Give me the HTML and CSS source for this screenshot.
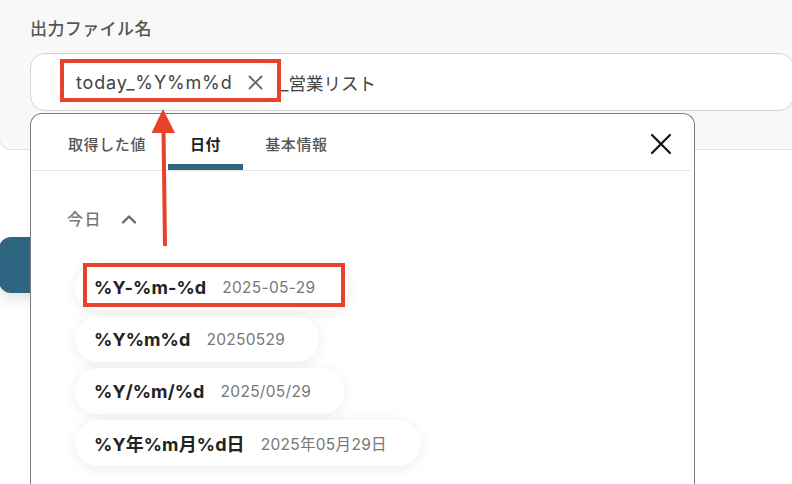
FILE: index.html
```html
<!DOCTYPE html>
<html lang="ja">
<head>
<meta charset="utf-8">
<link rel="stylesheet" href="styles.css">
</head>
<body>
<div class="page">
  <section class="top-panel">
    <div class="field-label">出力ファイル名</div>
    <div class="field-input">
      <span class="chip">
        <span class="chip-text">today_%Y%m%d</span>
        <svg class="chip-x" width="15" height="15" viewBox="0 0 15 15"><path d="M1.5 1.5 L13.5 13.5 M13.5 1.5 L1.5 13.5" stroke="#666" stroke-width="1.8" stroke-linecap="round" fill="none"/></svg>
      </span>
      <span class="suffix">_営業リスト</span>
    </div>
  </section>

  <div class="teal-button"></div>

  <div class="dropdown">
    <div class="tabs">
      <div class="tab">取得した値</div>
      <div class="tab active">日付</div>
      <div class="tab">基本情報</div>
      <svg class="close" width="22" height="22" viewBox="0 0 22 22"><path d="M2 2 L20 20 M20 2 L2 20" stroke="#111" stroke-width="2.2" stroke-linecap="round" fill="none"/></svg>
    </div>
    <div class="section-head">
      <span class="section-title">今日</span>
      <svg class="chev" width="16" height="10" viewBox="0 0 16 10"><path d="M2 8.5 L8 2.5 L14 8.5" stroke="#6a6a6a" stroke-width="2.4" stroke-linecap="round" stroke-linejoin="round" fill="none"/></svg>
    </div>
    <div class="pills">
      <div class="pill"><span class="code">%Y-%m-%d</span><span class="sample">2025-05-29</span></div>
      <div class="pill"><span class="code">%Y%m%d</span><span class="sample">20250529</span></div>
      <div class="pill"><span class="code">%Y/%m/%d</span><span class="sample">2025/05/29</span></div>
      <div class="pill"><span class="code">%Y年%m月%d日</span><span class="sample">2025年05月29日</span></div>
    </div>
  </div>

  <div class="mark mark-chip"></div>
  <div class="mark mark-pill"></div>
  <svg class="arrow" width="40" height="150" viewBox="0 0 40 150">
    <line x1="15" y1="138" x2="13.5" y2="22" stroke="#e8432a" stroke-width="4"/>
    <polygon points="13,1 1.5,25 25,25" fill="#e8432a"/>
  </svg>
</div>
</body>
</html>
```

FILE: styles.css
```css
* { box-sizing: border-box; }
html, body { margin: 0; padding: 0; background: #ffffff; }
body {
  font-family: "Inter", "Noto Sans CJK JP", sans-serif;
  width: 792px;
  height: 484px;
  overflow: hidden;
}
.page { position: relative; width: 792px; height: 484px; overflow: hidden; }

.top-panel {
  height: 150px;
  background: #f8f8f8;
  border-bottom: 1px solid #e2e2e2;
  border-left: 1px solid #e6e6e6;
  border-radius: 0 0 0 12px;
  margin-left: -1px;
  padding: 17px 0 0 30px;
}
.field-label {
  font-size: 17px;
  line-height: 24px;
  font-weight: 500;
  color: #555;
  letter-spacing: 0.4px;
}
.field-input {
  margin-top: 12px;
  height: 58px;
  margin-right: -2px;
  background: #fff;
  border: 1px solid #d4d4d4;
  border-radius: 15px;
  display: flex;
  align-items: center;
  padding-left: 24px;
}
.chip {
  display: inline-flex;
  align-items: center;
  height: 39px;
  padding: 0 14px 0 21px;
  background: #fff;
  border-radius: 20px;
  box-shadow: 0 1px 8px rgba(0,0,0,0.07);
}
.chip-text {
  font-size: 18px;
  color: #444;
  letter-spacing: 0.85px;
}
.chip-x { margin-left: 15px; }
.suffix {
  margin-left: 4px;
  font-size: 17.5px;
  color: #444;
}

.teal-button {
  margin-top: 87px;
  width: 80px;
  height: 56px;
  margin-left: -1px;
  background: #2e6681;
  border-radius: 12px;
  box-shadow: 0 6px 14px rgba(0,0,0,0.12);
}

.dropdown {
  position: absolute;
  left: 30px;
  top: 113px;
  width: 665px;
  height: 371px;
  background: #fff;
  border: 1px solid #7c7c7c;
  border-bottom: none;
  border-radius: 12px 12px 0 0;
}
.tabs {
  display: flex;
  align-items: stretch;
  height: 57px;
  padding-left: 15px;
  padding-right: 20px;
  margin-right: 3px;
  border-bottom: 1px solid #e6e6e6;
}
.tab {
  display: flex;
  align-items: center;
  padding: 2px 22px 0;
  font-size: 15px;
  letter-spacing: 0.6px;
  color: #555;
  font-weight: 500;
}
.tab.active {
  color: #1e1e1e;
  font-weight: 700;
  box-shadow: inset 0 -6px 0 #2e6681;
  border-radius: 5px 5px 0 0;
}
.close { margin-left: auto; align-self: center; margin-right: -1px; margin-top: 3px; }

.section-head {
  display: flex;
  align-items: center;
  padding: 36px 0 0 36px;
  height: 60px;
}
.section-title {
  font-size: 16px;
  color: #777;
  letter-spacing: 1.5px;
  line-height: 24px;
  font-weight: 500;
}
.chev { margin-left: 19px; }

.pills {
  display: flex;
  flex-direction: column;
  align-items: flex-start;
  gap: 6px;
  margin-top: 33px;
  padding-left: 44px;
}
.pill {
  display: flex;
  align-items: center;
  height: 46px;
  padding: 0 34px 0 19px;
  background: #fff;
  border-radius: 23px;
  box-shadow: 0 2px 14px rgba(0,0,0,0.08);
  gap: 16px;
}
.code {
  font-size: 18px;
  font-weight: 700;
  color: #222;
  letter-spacing: 0.1px;
}
.sample {
  font-size: 15.5px;
  color: #777;
  letter-spacing: 0.3px;
}

.mark {
  position: absolute;
  border: 4px solid #e8432a;
}
.mark-chip { left: 60px; top: 59px; width: 221px; height: 43px; }
.mark-pill { left: 83px; top: 263px; width: 262px; height: 44px; }
.arrow { position: absolute; left: 150px; top: 108px; }
```
